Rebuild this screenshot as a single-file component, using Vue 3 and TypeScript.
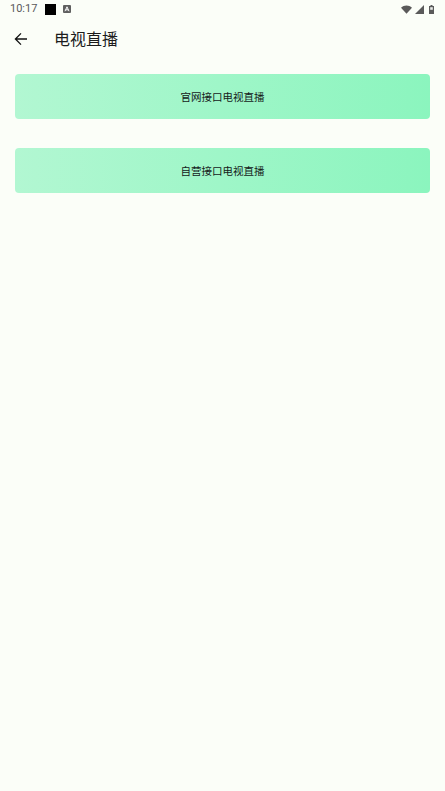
<template>
  <div class="page">
    <div class="status-bar">
      <span class="status-bar__time">10:17</span>
      <span class="status-bar__square" />
      <svg class="status-bar__notice" viewBox="0 0 8 8" width="8" height="8">
        <rect width="8" height="8" rx="1" fill="#5f5f5f" />
        <path d="M2 6.2 4 1.8 6 6.2M2.8 4.8H5.2" fill="none" stroke="#fff" stroke-width="1" />
      </svg>
      <span class="status-bar__spacer" />
      <svg class="status-bar__wifi" viewBox="0 0 12 9" width="11" height="9">
        <path d="M0 2.6C3.4-.6 8.6-.6 12 2.6L6 9Z" fill="#5a5a5a" />
      </svg>
      <svg class="status-bar__signal" viewBox="0 0 9 9" width="9" height="9">
        <path d="M9 0V9H0Z" fill="#5a5a5a" />
      </svg>
      <svg class="status-bar__battery" viewBox="0 0 5 9" width="5" height="9">
        <path d="M1.5 0H3.5V1H5V9H0V1H1.5Z" fill="#5a5a5a" />
        <rect x="1.2" y="2.2" width="2.6" height="2.6" fill="#e8ebe8" />
      </svg>
    </div>

    <header class="toolbar">
      <svg class="toolbar__back" viewBox="0 0 14 14" width="14" height="14">
        <path d="M13 7H1.6M7 1.4 1.4 7 7 12.6" fill="none" stroke="#111" stroke-width="1.3" />
      </svg>
      <h1 class="toolbar__title">电视直播</h1>
    </header>

    <main class="list">
      <button v-for="item in items" :key="item" class="list__item" type="button">{{ item }}</button>
    </main>
  </div>
</template>

<script setup lang="ts">
const items: string[] = ['官网接口电视直播', '自营接口电视直播']
</script>

<style>
html,
body {
  margin: 0;
  background: #fbfef8;
}
</style>

<style scoped>
.page {
  display: flex;
  flex-direction: column;
  height: 791px;
  overflow: hidden;
  background: #fbfef8;
  font-family: Roboto, "Noto Sans CJK SC", sans-serif;
}

.status-bar {
  display: flex;
  align-items: center;
  flex-shrink: 0;
  height: 18px;
  padding: 0 11px 0 10px;
  color: #5a5a5a;
}

.status-bar__time {
  font-size: 11px;
  line-height: 18px;
}

.status-bar__square {
  width: 11px;
  height: 11px;
  margin-left: 8px;
  background: #000;
}

.status-bar__notice {
  margin-left: 7px;
}

.status-bar__spacer {
  flex: 1;
}

.status-bar__wifi {
  margin-right: 3px;
}

.status-bar__signal {
  margin-right: 5px;
}

.toolbar {
  display: flex;
  align-items: center;
  flex-shrink: 0;
  height: 41px;
  padding-left: 14px;
}

.toolbar__title {
  margin: 0 0 1px 26px;
  font-size: 16px;
  font-weight: 400;
  color: #1c1c1c;
}

.list {
  display: flex;
  flex-direction: column;
  gap: 29px;
  padding: 15px 15px 0;
}

.list__item {
  height: 45px;
  padding: 0;
  border: 0;
  border-radius: 4px;
  background: linear-gradient(90deg, #b2f7d2, #8bf5be);
  font-family: inherit;
  font-size: 10.5px;
  color: #14201a;
}
</style>
